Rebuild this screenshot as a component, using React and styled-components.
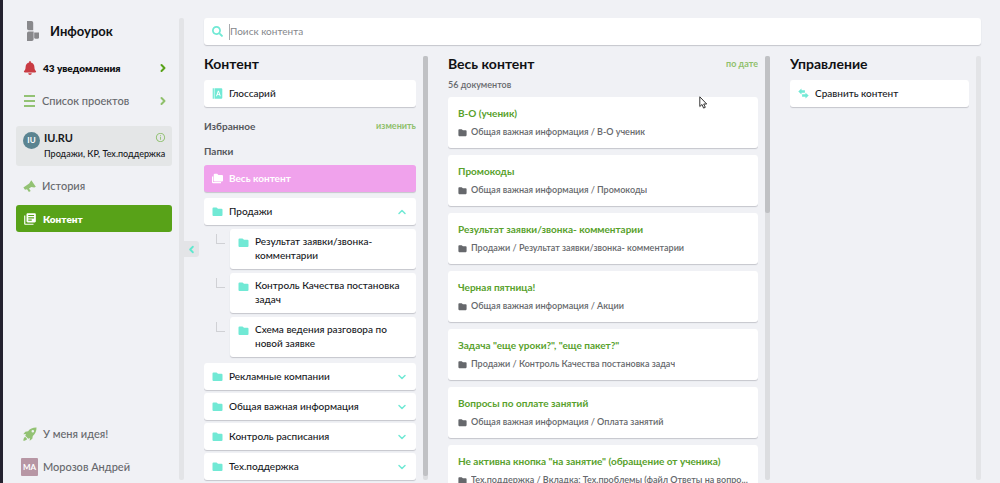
import styled, { createGlobalStyle } from 'styled-components'
import { MdLibraryBooks, MdInfoOutline } from 'react-icons/md'
import { FaBell, FaSearch } from 'react-icons/fa'
import { FiChevronDown, FiChevronLeft, FiChevronRight, FiChevronUp } from 'react-icons/fi'

const GlobalStyle = createGlobalStyle`
  * {
    box-sizing: border-box;
  }

  body {
    margin: 0;
    background: #f0f1f5;
    color: #16181c;
    font-family: Lato, 'Noto Sans', sans-serif;
    font-size: 10px;
    line-height: 14px;
  }

  button,
  input {
    font: inherit;
    color: inherit;
    margin: 0;
    padding: 0;
    border: 0;
    background: none;
  }

  button {
    text-align: left;
    cursor: pointer;
  }

  a {
    color: inherit;
    text-decoration: none;
  }

  h1, h2, h3, p, ul {
    margin: 0;
    padding: 0;
    list-style: none;
  }

  svg {
    flex: none;
    display: block;
  }
`

const Page = styled.div`
  display: flex;
  height: 100vh;
  overflow: hidden;
  border-left: 3px solid #24222f;
`

const Sidebar = styled.aside`
  position: relative;
  display: flex;
  flex: none;
  gap: 7px;
  width: 181px;
  padding: 18px 0 3px 13px;
`

const SidebarContent = styled.div`
  display: flex;
  flex-direction: column;
  flex: 1;
  min-width: 0;
`

const Logo = styled.a`
  display: flex;
  align-items: center;
  gap: 11px;
  height: 26px;
  padding-left: 11px;
  margin-bottom: 10px;
  font-size: 13px;
  font-weight: 700;
  color: #101114;
`

const NavItem = styled.a`
  display: flex;
  align-items: center;
  gap: 6px;
  width: 100%;
  height: 27px;
  padding: 0 3px 0 7px;
  margin-bottom: 6px;
  border-radius: 3px;
  font-size: ${({ $strong }) => ($strong ? '10px' : '11px')};
  font-weight: ${({ $strong }) => ($strong ? 800 : 500)};
  color: ${({ $active, $strong }) =>
    $active ? '#fff' : $strong ? '#101114' : '#66686c'};
  background: ${({ $active }) => ($active ? '#58a218' : 'transparent')};

  span {
    flex: 1;
  }
`

const Project = styled.a`
  display: flex;
  gap: 4px;
  height: 40px;
  padding: 6px 6px 0 7px;
  margin: 12px 0 6px;
  border-radius: 3px;
  background: #e4e6e7;
`

const ProjectBadge = styled.span`
  flex: none;
  width: 17px;
  height: 17px;
  border-radius: 50%;
  background: #5b8491;
  color: #fff;
  font-size: 8px;
  font-weight: 700;
  line-height: 17px;
  text-align: center;
`

const ProjectText = styled.div`
  flex: 1;
  min-width: 0;
  white-space: nowrap;

  h3 {
    display: flex;
    justify-content: space-between;
    font-size: 11px;
    font-weight: 700;
    line-height: 12px;
  }

  p {
    margin-top: 3px;
    font-size: 9px;
    font-weight: 500;
  }
`

const SidebarFooter = styled.div`
  margin-top: auto;

  > :last-child {
    margin-bottom: 0;
  }
`

const Avatar = styled.span`
  && {
    flex: none;
    width: 17px;
    height: 18px;
    margin-left: -2px;
    margin-right: -1px;
    border-radius: 1px;
    background: #b796a4;
    color: #fff;
    font-size: 8px;
    font-weight: 700;
    line-height: 18px;
    text-align: center;
  }
`

const Track = styled.div`
  flex: none;
  width: 5px;
  border-radius: 2px;
  background: ${({ $light }) => ($light ? '#e3e4e7' : '#dcdde0')};
`

const Thumb = styled.div`
  height: ${({ $size }) => $size};
  border-radius: 2px;
  background: #c0c1c4;
`

const CollapseButton = styled.button`
  position: absolute;
  top: 241px;
  left: 100%;
  display: flex;
  align-items: center;
  justify-content: center;
  width: 15px;
  height: 16px;
  border-radius: 0 3px 3px 0;
  background: #e3e4e7;
  color: #5fe8cf;
`

const Main = styled.main`
  display: flex;
  flex-direction: column;
  flex: 1;
  min-width: 0;
  gap: 11px;
  padding: 18px 19px 3px 20px;
`

const SearchBox = styled.label`
  display: flex;
  flex: none;
  align-items: center;
  gap: 6px;
  height: 27px;
  padding: 0 8px;
  border-radius: 3px;
  background: #fff;
  color: #71e9d5;
  box-shadow: 0 1px 1px rgba(40, 44, 60, 0.22);

  input {
    flex: 1;
    height: 16px;
    padding-bottom: 2px;
    border-left: 1px solid #a9abae;
    outline: none;
    color: #16181c;
  }

  input::placeholder {
    color: #85878b;
    opacity: 1;
  }
`

const Columns = styled.div`
  display: grid;
  grid-template-columns: minmax(0, 224fr) minmax(0, 322fr) minmax(0, 191fr);
  grid-template-rows: minmax(0, 1fr);
  gap: 20px;
  flex: 1;
  min-height: 0;
`

const Column = styled.section`
  display: flex;
  gap: 7px;
  min-width: 0;
`

const ColumnBody = styled.div`
  flex: 1;
  min-width: 0;
  height: calc(100% + 3px);
  overflow: hidden;
`

const Heading = styled.h2`
  font-size: 14px;
  font-weight: 700;
  line-height: 16px;
  color: #101114;
`

const HeadingRow = styled.div`
  display: flex;
  align-items: center;
  justify-content: space-between;
`

const SmallButton = styled.button`
  font-size: 9px;
  font-weight: 700;
  color: #8fc06b;
`

const SectionTitle = styled.h3`
  font-size: 10px;
  font-weight: 700;
  line-height: 14px;
  color: #55575c;
`

const Card = styled.button`
  display: flex;
  align-items: ${({ $tall }) => ($tall ? 'flex-start' : 'center')};
  gap: 6px;
  width: 100%;
  min-height: 27px;
  padding: ${({ $tall }) => ($tall ? '5px 8px' : '0 8px')};
  border-radius: 3px;
  background: ${({ $selected }) => ($selected ? '#f0a2ec' : '#fff')};
  color: ${({ $selected }) => ($selected ? '#fff' : '#16181c')};
  font-weight: ${({ $selected }) => ($selected ? 700 : 500)};
  box-shadow: 0 1px 1px rgba(40, 44, 60, 0.22);

  svg {
    margin-top: ${({ $tall }) => ($tall ? '3px' : '0')};
    color: ${({ $selected }) => ($selected ? '#fff' : '#71e9d5')};
  }

  span {
    flex: 1;
    padding-bottom: 2px;
  }
`

const Favorites = styled.div`
  display: flex;
  align-items: center;
  justify-content: space-between;
  margin: 12px 0 11px;
`

const Folders = styled.ul`
  display: flex;
  flex-direction: column;
  gap: 3px;
  margin-top: 7px;

  > li:first-child {
    margin-bottom: 3px;
  }
`

const Subfolders = styled.ul`
  display: flex;
  flex-direction: column;
  gap: 4px;
  padding: 4px 0 3px;

  li {
    display: flex;
    gap: 5px;
    padding-left: 12px;
  }
`

const Branch = styled.span`
  flex: none;
  width: 9px;
  height: 10px;
  margin-top: 5px;
  border-left: 1px solid #d0d1d5;
  border-bottom: 1px solid #d0d1d5;
`

const Count = styled.p`
  margin-top: 6px;
  font-size: 9px;
  font-weight: 600;
  color: #66686c;
`

const Documents = styled.ul`
  display: flex;
  flex-direction: column;
  gap: 7px;
  margin-top: 5px;
`

const DocumentCard = styled.li`
  padding: 9px 10px;
  border-radius: 3px;
  background: #fff;
  box-shadow: 0 1px 1px rgba(40, 44, 60, 0.22);

  a {
    display: block;
    font-weight: 700;
    color: #58a12c;
  }

  p {
    display: flex;
    align-items: center;
    gap: 4px;
    margin-top: 5px;
    font-size: 9px;
    font-weight: 600;
    color: #66686c;
  }

  p span {
    overflow: hidden;
    text-overflow: ellipsis;
    white-space: nowrap;
  }
`

const Actions = styled.div`
  margin-top: 8px;
`

const Cursor = styled.svg`
  position: absolute;
  top: 96px;
  left: 699px;
`

const subfolders = [
  'Результат заявки/звонка-комментарии',
  'Контроль Качества постановка задач',
  'Схема ведения разговора по новой заявке',
]

const folders = [
  'Рекламные компании',
  'Общая важная информация',
  'Контроль расписания',
  'Тех.поддержка',
]

const documents = [
  { id: 1, title: 'В-О (ученик)', path: 'Общая важная информация / В-О ученик' },
  { id: 2, title: 'Промокоды', path: 'Общая важная информация / Промокоды' },
  {
    id: 3,
    title: 'Результат заявки/звонка- комментарии',
    path: 'Продажи / Результат заявки/звонка- комментарии',
  },
  { id: 4, title: 'Черная пятница!', path: 'Общая важная информация / Акции' },
  {
    id: 5,
    title: 'Задача "еще уроки?", "еще пакет?"',
    path: 'Продажи / Контроль Качества постановка задач',
  },
  {
    id: 6,
    title: 'Вопросы по оплате занятий',
    path: 'Общая важная информация / Оплата занятий',
  },
  {
    id: 7,
    title: 'Не активна кнопка "на занятие" (обращение от ученика)',
    path: 'Тех.поддержка / Вкладка: Тех.проблемы (файл Ответы на вопро...',
  },
]

function FolderIcon({ size = 11 }) {
  return (
    <svg width={size} height={size} viewBox="0 0 11 11" fill="currentColor">
      <path d="M1.5 1.500h3L6 2.700h3.500a1 1 0 0 1 1 1V9a1 1 0 0 1-1 1h-8a1 1 0 0 1-1-1V2.500a1 1 0 0 1 1-1z" />
    </svg>
  )
}

function FoldersIcon() {
  return (
    <svg width="11" height="11" viewBox="0 0 11 11" fill="currentColor">
      <path d="M0 3.500h1.200V9H9v1.200H1a1 1 0 0 1-1-1z" />
      <path d="M2.700.8h2.500l1.200 1.200H10a1 1 0 0 1 1 1v4.500a1 1 0 0 1-1 1H2.700a1 1 0 0 1-1-1V1.800a1 1 0 0 1 1-1z" />
    </svg>
  )
}

function LogoMark() {
  return (
    <svg width="12" height="20" viewBox="0 0 12 20" fill="#89898c">
      <path d="M0 0h4.500A1.700 1.700 0 0 1 6.200 1.700V9.300H1.700A1.700 1.700 0 0 1 0 7.600z" />
      <path d="M1.700 10.500H6.600v7.800A1.700 1.700 0 0 1 4.900 20H0v-7.800a1.700 1.700 0 0 1 1.700-1.700z" />
      <path d="M7.200 11.500H12v4.700a1.500 1.500 0 0 1-1.500 1.500H8.700a1.500 1.500 0 0 1-1.500-1.500z" />
    </svg>
  )
}

function ListIcon() {
  return (
    <svg width="13" height="12" viewBox="0 0 13 12" fill="#93c274">
      <path d="M1 0h11v2H1zM1 5h11v2H1zM1 10h11v2H1z" />
    </svg>
  )
}

function MegaphoneIcon() {
  return (
    <svg width="13" height="12" viewBox="0 0 13 12" fill="#93c274">
      <path d="M8.300.2 12.800 6.800l-1.500.6-3-.3-2.300 1.300 1.700 2.500-1.800 1-1.900-2.700-2 .6L.4 7.600l5.800-4z" />
    </svg>
  )
}

function RocketIcon() {
  return (
    <svg width="14" height="14" viewBox="0 0 14 14" fill="#93c274">
      <path
        fillRule="evenodd"
        d="M13.500.5C9.800.4 7 1.700 5.100 4.200L2.300 4.700.3 7.300l2.600-.2-.6 1.600 3 3 1.600-.6-.2 2.600 2.600-2 .5-2.800C12.300 7 13.600 4.200 13.500.5zM9.800 2.900a1.300 1.300 0 1 1 0 2.600 1.300 1.300 0 0 1 0-2.600z"
      />
      <path d="M2.100 9.800 4.200 11.900C3.500 13 2 13.600.3 13.700.4 12 1 10.500 2.100 9.800z" />
    </svg>
  )
}

function GlossaryIcon() {
  return (
    <svg width="11" height="11" viewBox="0 0 11 11" fill="currentColor">
      <path d="M.7.3h1.200v10.400H.7z" />
      <path
        fillRule="evenodd"
        d="M2.500.3H9.300a1 1 0 0 1 1 1v8.400a1 1 0 0 1-1 1H2.500zM5.900 2.700 4 8.300h1l.4-1.200h2l.4 1.200h1L6.900 2.700zm.5 1.300.7 2.200H5.700z"
      />
    </svg>
  )
}

function CompareIcon() {
  return (
    <svg width="11" height="11" viewBox="0 0 11 11" fill="currentColor">
      <path d="M3.500.6v1.700h3.400v2.500H3.500v1.700L.3 3.500z" />
      <path d="M7.500 4.700v1.600H4.100v2.500h3.400v1.700l3.200-2.900z" />
    </svg>
  )
}

/**
 * @returns {JSX.Element}
 */

export default function App() {
  return (
    <>
      <GlobalStyle />
      <Page>
        <Sidebar>
          <SidebarContent>
            <Logo href="#">
              <LogoMark />
              Инфоурок
            </Logo>
            <nav>
              <NavItem href="#" $strong>
                <FaBell size={14} color="#c93b43" />
                <span>43 уведомления</span>
                <FiChevronRight size={12} strokeWidth={4} color="#58a218" />
              </NavItem>
              <NavItem href="#">
                <ListIcon />
                <span>Список проектов</span>
                <FiChevronRight size={12} strokeWidth={4} color="#8fc06b" />
              </NavItem>
              <Project href="#">
                <ProjectBadge>IU</ProjectBadge>
                <ProjectText>
                  <h3>
                    IU.RU
                    <MdInfoOutline size={11} color="#93c274" />
                  </h3>
                  <p>Продажи, КР, Тех.поддержка</p>
                </ProjectText>
              </Project>
              <NavItem href="#">
                <MegaphoneIcon />
                <span>История</span>
              </NavItem>
              <NavItem href="#" $active $strong>
                <MdLibraryBooks size={14} />
                <span>Контент</span>
              </NavItem>
            </nav>
            <SidebarFooter>
              <NavItem href="#">
                <RocketIcon />
                <span>У меня идея!</span>
              </NavItem>
              <NavItem as="button">
                <Avatar>МА</Avatar>
                <span>Морозов Андрей</span>
              </NavItem>
            </SidebarFooter>
          </SidebarContent>
          <Track $light />
          <CollapseButton aria-label="Свернуть">
            <FiChevronLeft size={11} strokeWidth={4} />
          </CollapseButton>
        </Sidebar>

        <Main>
          <SearchBox>
            <FaSearch size={11} />
            <input type="text" placeholder="Поиск контента" />
          </SearchBox>

          <Columns>
            <Column>
              <ColumnBody>
                <Heading>Контент</Heading>
                <Actions>
                  <Card>
                    <GlossaryIcon />
                    <span>Глоссарий</span>
                  </Card>
                </Actions>
                <Favorites>
                  <SectionTitle>Избранное</SectionTitle>
                  <SmallButton>изменить</SmallButton>
                </Favorites>
                <SectionTitle>Папки</SectionTitle>
                <Folders>
                  <li>
                    <Card $selected>
                      <FoldersIcon />
                      <span>Весь контент</span>
                    </Card>
                  </li>
                  <li>
                    <Card>
                      <FolderIcon />
                      <span>Продажи</span>
                      <FiChevronUp size={12} strokeWidth={3} />
                    </Card>
                    <Subfolders>
                      {subfolders.map((name) => (
                        <li key={name}>
                          <Branch />
                          <Card $tall>
                            <FolderIcon />
                            <span>{name}</span>
                          </Card>
                        </li>
                      ))}
                    </Subfolders>
                  </li>
                  {folders.map((name) => (
                    <li key={name}>
                      <Card>
                        <FolderIcon />
                        <span>{name}</span>
                        <FiChevronDown size={12} strokeWidth={3} />
                      </Card>
                    </li>
                  ))}
                </Folders>
              </ColumnBody>
              <Track>
                <Thumb $size="99%" />
              </Track>
            </Column>

            <Column>
              <ColumnBody>
                <HeadingRow>
                  <Heading>Весь контент</Heading>
                  <SmallButton>по дате</SmallButton>
                </HeadingRow>
                <Count>56 документов</Count>
                <Documents>
                  {documents.map(({ id, title, path }) => (
                    <DocumentCard key={id}>
                      <a href="#">{title}</a>
                      <p>
                        <FolderIcon size={9} />
                        <span>{path}</span>
                      </p>
                    </DocumentCard>
                  ))}
                </Documents>
              </ColumnBody>
              <Track>
                <Thumb $size="37%" />
              </Track>
            </Column>

            <Column>
              <ColumnBody>
                <Heading>Управление</Heading>
                <Actions>
                  <Card>
                    <CompareIcon />
                    <span>Сравнить контент</span>
                  </Card>
                </Actions>
              </ColumnBody>
              <Track $light />
            </Column>
          </Columns>
        </Main>
      </Page>
      <Cursor width="9" height="13" viewBox="0 0 9 13" fill="#fff" stroke="#333">
        <path d="M.8.8v9.700l2.200-2 1.600 3.600 1.700-.8-1.600-3.300h3z" />
      </Cursor>
    </>
  )
}
